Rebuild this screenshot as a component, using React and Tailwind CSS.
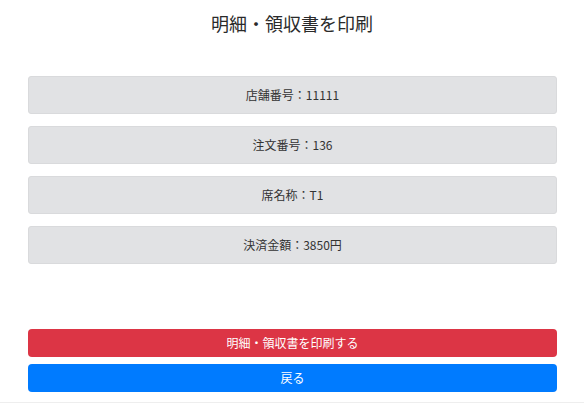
export default function App() {
  const rows = ["店舗番号：11111", "注文番号：136", "席名称：T1", "決済金額：3850円"];
  return (
    <div className="w-[584px] h-[405px] bg-white flex flex-col" style={{ fontFamily: '"Noto Sans CJK JP", "Noto Sans", sans-serif' }}>
      <div className="h-[45px] flex items-center justify-center text-[18px] text-[#2a2a2a] pt-[1px]">明細・領収書を印刷</div>
      <div className="flex flex-col gap-[12px] px-[28px] pt-[31px] pr-[27px]">
        {rows.map((r) => (
          <div key={r} className="h-[38px] rounded-[3px] bg-[#e1e2e4] border border-[#d9dadc] flex items-center justify-center text-[12px] text-[#333]">
            {r}
          </div>
        ))}
      </div>
      <div className="flex flex-col gap-[7px] px-[28px] pr-[27px] mt-[65px]">
        <div className="h-[28px] rounded-[4px] bg-[#dc3545] flex items-center justify-center text-[12px] text-white">明細・領収書を印刷する</div>
        <div className="h-[28px] rounded-[4px] bg-[#007bff] flex items-center justify-center text-[12px] text-white">戻る</div>
      </div>
      <div className="mt-[10px] h-[1px] bg-[#eeeeee]"></div>
    </div>
  );
}
